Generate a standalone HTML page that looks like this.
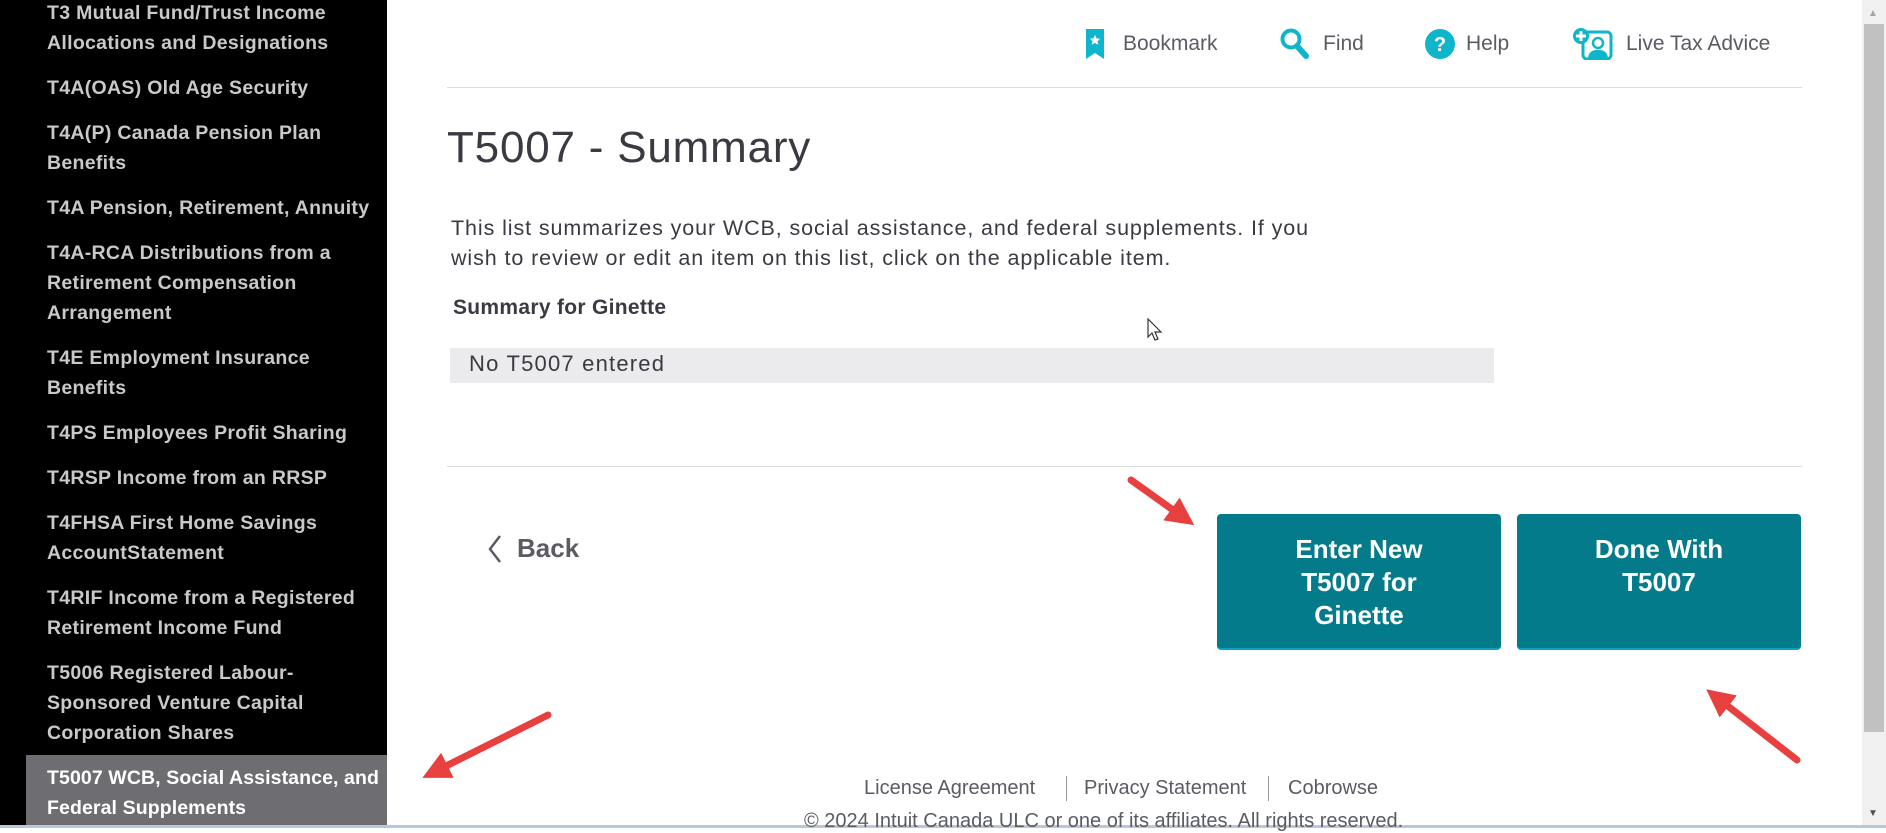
<!DOCTYPE html>
<html><head><meta charset="utf-8"><style>
*{margin:0;padding:0;box-sizing:border-box}
body{width:1886px;height:828px;overflow:hidden;background:#fff;font-family:"Liberation Sans",sans-serif;position:relative}
#side{position:absolute;left:0;top:0;width:387px;height:828px;background:#000}
.it{position:absolute;left:47px;color:#c9c9cc;font-weight:bold;font-size:19.5px;line-height:30px;width:345px;letter-spacing:0.3px;white-space:nowrap}
#sel{position:absolute;left:26px;top:755px;width:361px;height:73px;background:#6e6e72}
.nav{position:absolute;top:32px;font-size:21px;color:#5b5b63;line-height:24px}
.abs{position:absolute}
.btn{position:absolute;top:514px;width:284px;height:136px;background:#047b8b;border-radius:4px;border-bottom:2px solid #0aa1c2;color:#fff;font-weight:bold;font-size:26px;line-height:33px;text-align:center;padding-top:19px}
.foot{position:absolute;top:777px;font-size:20px;color:#5b5b63}
</style></head><body>
<div id="side">
<div id="sel"></div>
<div class="it" style="top:-2px">T3 Mutual Fund/Trust Income<br>Allocations and Designations</div>
<div class="it" style="top:73px">T4A(OAS) Old Age Security</div>
<div class="it" style="top:118px">T4A(P) Canada Pension Plan<br>Benefits</div>
<div class="it" style="top:193px">T4A Pension, Retirement, Annuity</div>
<div class="it" style="top:238px">T4A-RCA Distributions from a<br>Retirement Compensation<br>Arrangement</div>
<div class="it" style="top:343px">T4E Employment Insurance<br>Benefits</div>
<div class="it" style="top:418px">T4PS Employees Profit Sharing</div>
<div class="it" style="top:463px">T4RSP Income from an RRSP</div>
<div class="it" style="top:508px">T4FHSA First Home Savings<br>AccountStatement</div>
<div class="it" style="top:583px">T4RIF Income from a Registered<br>Retirement Income Fund</div>
<div class="it" style="top:658px">T5006 Registered Labour-<br>Sponsored Venture Capital<br>Corporation Shares</div>
<div class="it" style="top:763px;color:#fff;letter-spacing:0.1px">T5007 WCB, Social Assistance, and<br>Federal Supplements</div>
</div>
<div class="abs" style="left:1862px;top:0;width:24px;height:828px;background:#f0f0f0"></div>
<div class="abs" style="left:1864px;top:24px;width:20px;height:708px;background:#c1c1c1"></div>
<div class="abs" style="left:1868px;top:8px;font-size:10px;color:#a3a3a3">▲</div>
<div class="abs" style="left:1868px;top:808px;font-size:10px;color:#505050">▼</div>
<div class="abs" style="left:0;top:825px;width:1886px;height:3px;background:#b8c8d8"></div>
<svg class="abs" style="left:1085px;top:29px" width="20" height="30"><path d="M1 0H19V30L10 24L1 30Z" fill="#0fb6cb"/><path d="M10 6l1.6 3.4 3.6.4-2.7 2.4.8 3.6-3.3-1.9-3.3 1.9.8-3.6-2.7-2.4 3.6-.4z" fill="#fff"/></svg>
<div class="nav" style="left:1123px">Bookmark</div>
<svg class="abs" style="left:1280px;top:28px" width="30" height="32"><circle cx="11" cy="11" r="8.5" fill="none" stroke="#0fb6cb" stroke-width="4"/><path d="M17 18l9 10" stroke="#0fb6cb" stroke-width="6" stroke-linecap="round"/></svg>
<div class="nav" style="left:1323px">Find</div>
<svg class="abs" style="left:1425px;top:29px" width="30" height="30"><circle cx="15" cy="15" r="15" fill="#0fb6cb"/><text x="15" y="22" font-family="Liberation Sans" font-weight="bold" font-size="20" fill="#fff" text-anchor="middle">?</text></svg>
<div class="nav" style="left:1466px">Help</div>
<svg class="abs" style="left:1573px;top:28px" width="40" height="32"><rect x="10" y="4" width="28" height="27" rx="4" fill="none" stroke="#0fb6cb" stroke-width="3"/><circle cx="25" cy="15" r="5" fill="none" stroke="#0fb6cb" stroke-width="2.5"/><path d="M15 30c1-7 5-8 10-8s9 1 10 8z" fill="#0fb6cb"/><circle cx="8" cy="8" r="8" fill="#0fb6cb"/><path d="M8 3v10M3 8h10" stroke="#fff" stroke-width="3"/></svg>
<div class="nav" style="left:1626px">Live Tax Advice</div>
<div class="abs" style="left:447px;top:87px;width:1355px;height:1px;background:#dcdcdc"></div>
<div class="abs" style="left:447px;top:122px;font-size:44px;color:#3a3a42;line-height:52px;letter-spacing:0.8px">T5007 - Summary</div>
<div class="abs" style="left:451px;top:213px;font-size:21.5px;color:#3a3a42;line-height:30px;width:1000px;letter-spacing:0.9px;white-space:nowrap">This list summarizes your WCB, social assistance, and federal supplements. If you<br>wish to review or edit an item on this list, click on the applicable item.</div>
<div class="abs" style="left:453px;top:296px;font-size:21px;font-weight:bold;color:#3a3a42;letter-spacing:0.3px">Summary for Ginette</div>
<div class="abs" style="left:450px;top:348px;width:1044px;height:35px;background:#ebebee"></div>
<div class="abs" style="left:469px;top:349px;font-size:22px;color:#3a3a42;line-height:30px;letter-spacing:1.2px">No T5007 entered</div>
<svg class="abs" style="left:1147px;top:318px" width="16" height="24"><path d="M1 1v18l4-4 3 7 3-1-3-7h6z" fill="#fff" stroke="#333" stroke-width="1.2"/></svg>
<div class="abs" style="left:447px;top:466px;width:1355px;height:1px;background:#dcdcdc"></div>
<svg class="abs" style="left:487px;top:534px" width="16" height="30"><path d="M13 2L3 15l10 13" fill="none" stroke="#5b5b63" stroke-width="2.5"/></svg>
<div class="abs" style="left:517px;top:533px;font-size:26px;font-weight:bold;color:#5b5b63">Back</div>
<div class="btn" style="left:1217px">Enter New<br>T5007 for<br>Ginette</div>
<div class="btn" style="left:1517px">Done With<br>T5007</div>
<div class="foot" style="left:864px">License Agreement</div>
<div class="abs" style="left:1066px;top:776px;width:1px;height:25px;background:#999"></div>
<div class="foot" style="left:1084px">Privacy Statement</div>
<div class="abs" style="left:1268px;top:776px;width:1px;height:25px;background:#999"></div>
<div class="foot" style="left:1288px">Cobrowse</div>
<div class="foot" style="left:804px;top:810px">© 2024 Intuit Canada ULC or one of its affiliates. All rights reserved.</div>
<svg class="abs" style="left:0;top:0" width="1886" height="828">
<defs><marker id="a" markerWidth="4" markerHeight="4" refX="1.5" refY="2" orient="auto"><path d="M0 0L4 2L0 4z" fill="#e8403f"/></marker></defs>
<g stroke="#e8403f" stroke-width="7" stroke-linecap="round" marker-end="url(#a)">
<path d="M1131 480L1180 515"/>
<path d="M548 715L438 770"/>
<path d="M1797 760L1720 700"/>
</g></svg>
</body></html>
